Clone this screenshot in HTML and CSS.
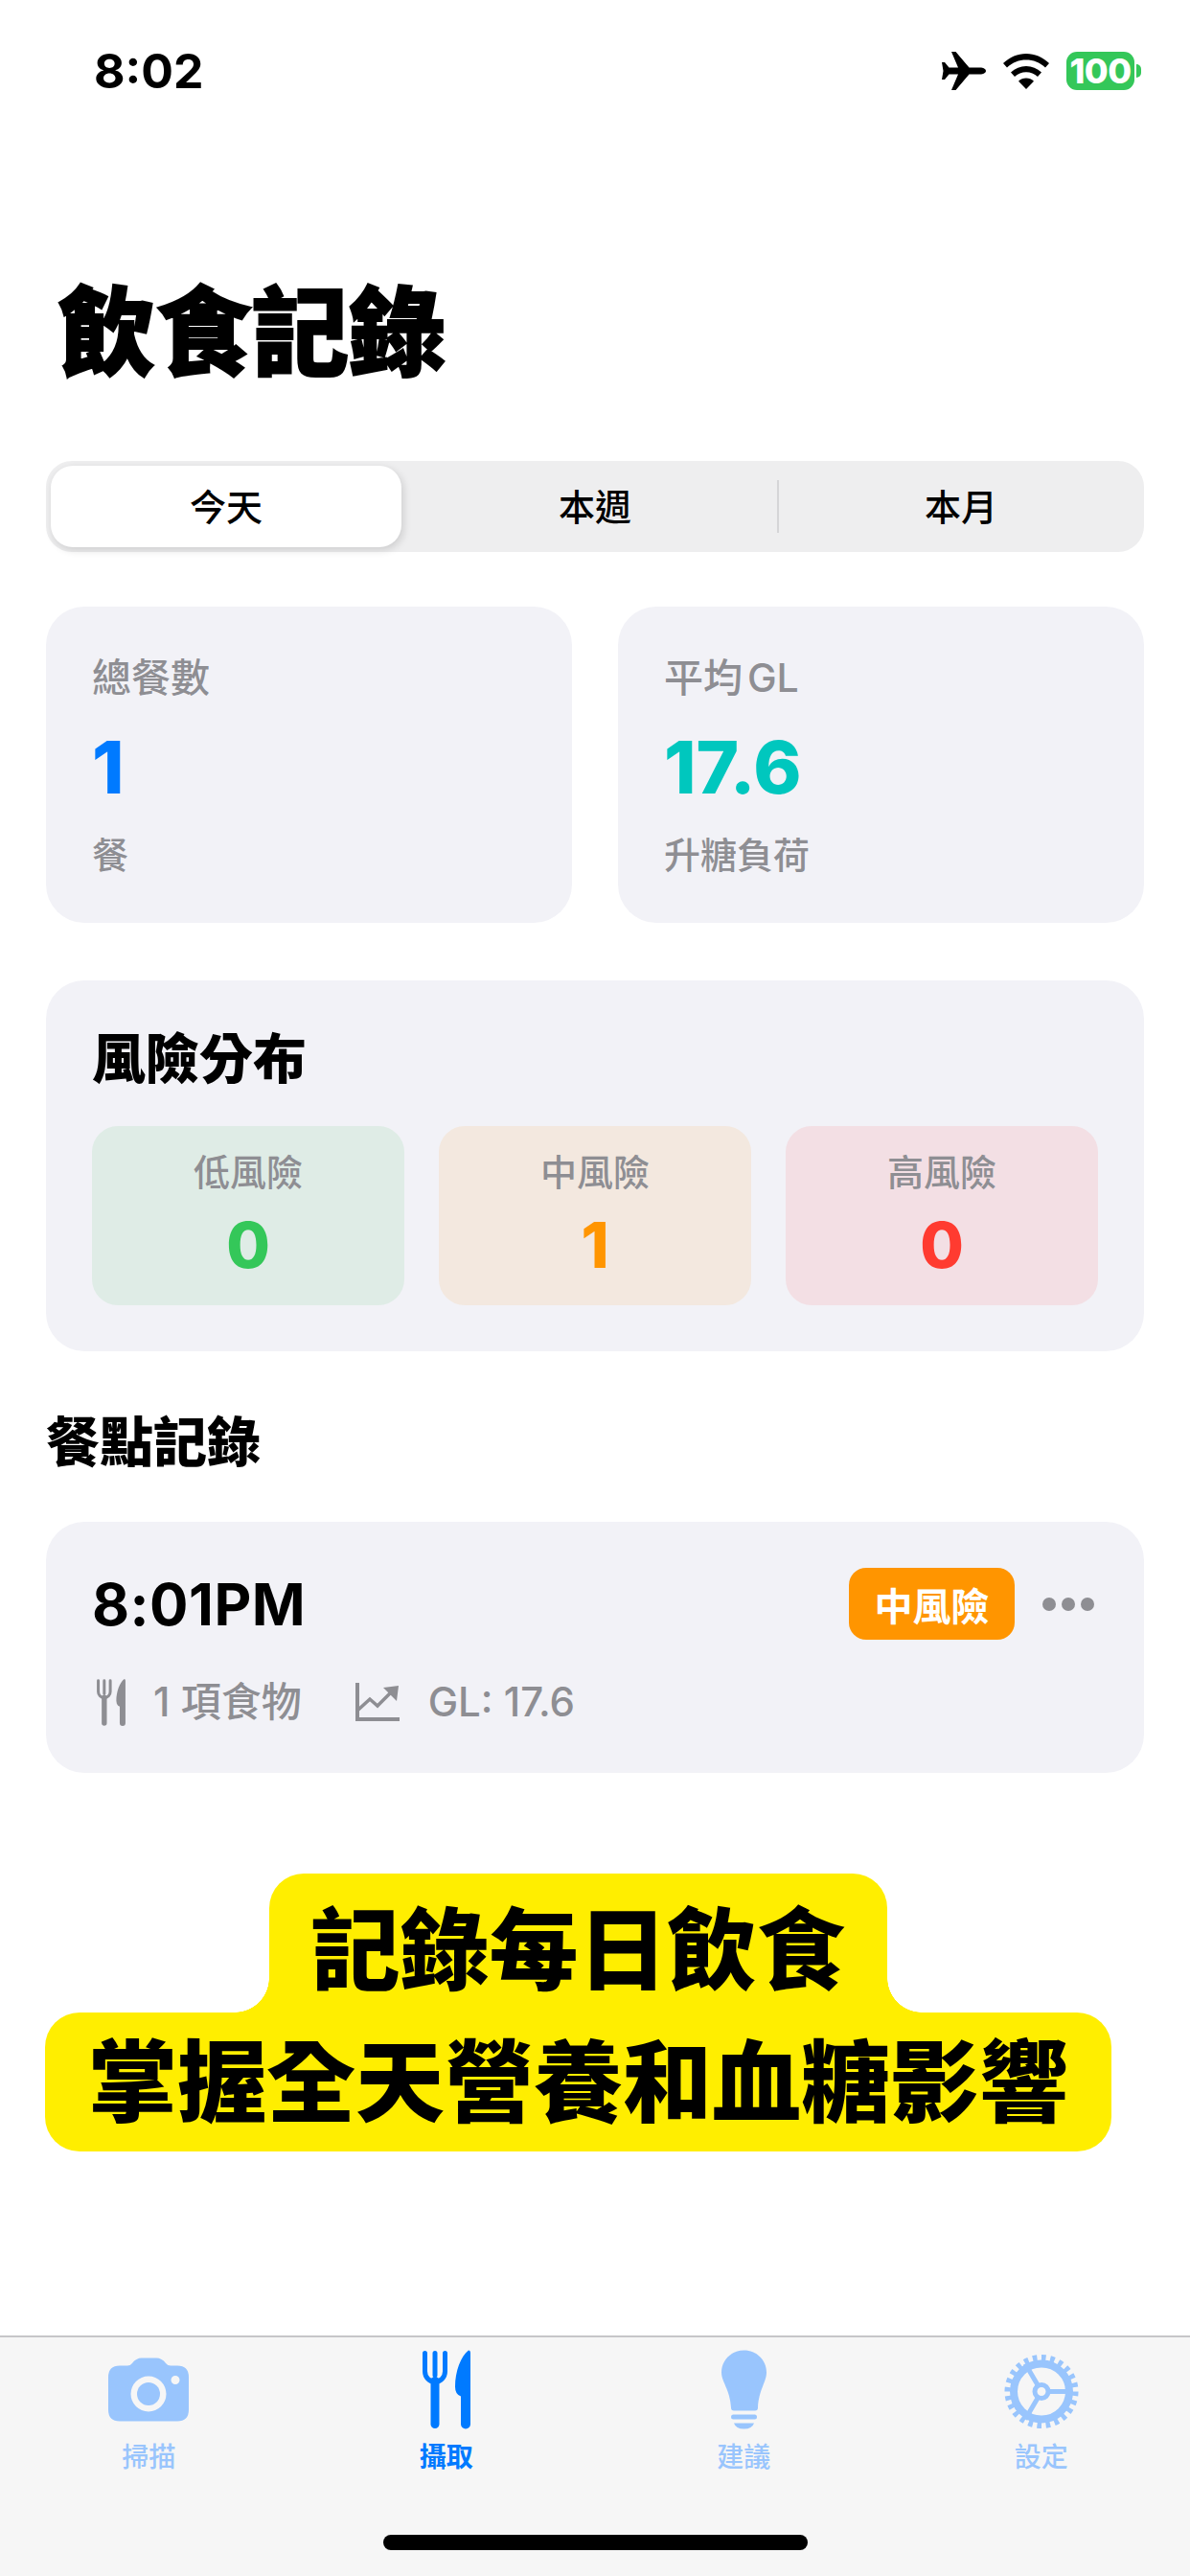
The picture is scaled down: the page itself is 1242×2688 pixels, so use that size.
FILE: index.html
```html
<!DOCTYPE html>
<html lang="zh-Hant">
<head>
<meta charset="utf-8">
<title>飲食記錄</title>
<link rel="stylesheet" href="styles.css">
</head>
<body>
<div class="screen">
  <header class="status">
    <span class="clock">8:02</span>
    <div class="status-icons">
      <svg class="ic-plane" viewBox="0 0 46 40" width="46" height="40"><path fill="#000" d="M46 20c0-2.200-3-3.600-6-3.600H28.500L14.500 0H10l7 16.400H7.500L3 11H0l1.500 9L0 29h3l4.500-5.400H17L10 40h4.500l14-16.400H40c3 0 6-1.400 6-3.600z"/></svg>
      <svg class="ic-wifi" viewBox="0 0 48 37" width="48" height="37"><path fill="#000" d="M24 0C15 0 7 3.500 0 10l4 4.500C10 9 16.500 6.500 24 6.500S38 9 44 14.500l4-4.500C41 3.500 33 0 24 0zM24 13c-6 0-11.500 2.300-16 6.500l4 4.500c3.300-3 7.500-4.800 12-4.800s8.700 1.800 12 4.800l4-4.500C35.500 15.300 30 13 24 13zM24 25.500c-3 0-5.800 1.100-8 3.200L24 37l8-8.300c-2.200-2.100-5-3.200-8-3.200z"/></svg>
      <div class="battery"><span class="battery-body">100</span><span class="battery-nub"></span></div>
    </div>
  </header>

  <main class="content">
    <h1 class="title">飲食記錄</h1>

    <nav class="segment">
      <span class="seg seg-active">今天</span>
      <span class="seg seg-mid">本週</span>
      <span class="seg-divider"></span>
      <span class="seg seg-last">本月</span>
    </nav>

    <section class="stats">
      <article class="stat">
        <div class="stat-label">總餐數</div>
        <div class="stat-value blue">1</div>
        <div class="stat-sub">餐</div>
      </article>
      <article class="stat">
        <div class="stat-label">平均 GL</div>
        <div class="stat-value teal">17.6</div>
        <div class="stat-sub">升糖負荷</div>
      </article>
    </section>

    <section class="risk">
      <h2 class="risk-title">風險分布</h2>
      <div class="risk-grid">
        <div class="tile tile-low"><div class="tile-label">低風險</div><div class="tile-value v-green">0</div></div>
        <div class="tile tile-mid"><div class="tile-label">中風險</div><div class="tile-value v-orange">1</div></div>
        <div class="tile tile-high"><div class="tile-label">高風險</div><div class="tile-value v-red">0</div></div>
      </div>
    </section>

    <h2 class="section-title">餐點記錄</h2>

    <article class="meal">
      <div class="meal-top">
        <span class="meal-time">8:01PM</span>
        <div class="meal-actions">
          <span class="badge">中風險</span>
          <span class="dots"><i></i><i></i><i></i></span>
        </div>
      </div>
      <div class="meal-meta">
        <svg class="ic-fork-sm" viewBox="0 0 50 82" width="30" height="49"><g fill="none" stroke="#8e8e93" stroke-linecap="round"><path stroke-width="5" d="M2.500 3V22a10.500 11 0 0 0 21 0V3M13 3V26"/><path stroke-width="9" d="M13 32V77"/></g><path fill="#8e8e93" d="M48 0q2 0 2 3V77a5 5 0 0 1-10 0V48q-6-2-6-10C34 22 40 6 48 0z"/></svg>
        <span class="meta-text">1 項食物</span>
        <svg class="ic-chart" viewBox="0 0 46 40" width="46" height="40"><g fill="none" stroke="#8e8e93"><path stroke-width="4" d="M2 0V38H46"/><path stroke-width="3.500" d="M3 28L15 17L23 24L37 10"/></g><path fill="#8e8e93" d="M29 5L45 3L43 19z"/></svg>
        <span class="meta-text">GL: 17.6</span>
      </div>
    </article>

    <div class="banner">
      <div class="banner-top">記錄每日飲食</div>
      <div class="banner-bottom">掌握全天營養和血糖影響</div>
    </div>
  </main>

  <footer class="tabbar">
    <div class="tabs">
      <div class="tab tab-off">
        <svg class="tab-icon" viewBox="0 0 84 66" width="84" height="66"><path class="off-fill" fill-rule="evenodd" d="M12 8H20Q23 8 25 5.500Q29 0 35 0H50Q56 0 60 5.500Q62 8 65 8H72Q84 8 84 20V54Q84 66 72 66H12Q0 66 0 54V20Q0 8 12 8zM42 19a18.500 18.500 0 1 0 0 37a18.500 18.500 0 1 0 0-37zM70 18.500a4.500 4.500 0 1 0 0 9a4.500 4.500 0 1 0 0-9z"/><circle class="off-fill" cx="42" cy="37.500" r="12"/></svg>
        <span class="tab-label">掃描</span>
      </div>
      <div class="tab tab-on">
        <svg class="tab-icon" viewBox="0 0 50 82" width="50" height="82"><g fill="none" stroke="#007aff" stroke-linecap="round"><path stroke-width="5" d="M2.500 3V22a10.500 11 0 0 0 21 0V3M13 3V26"/><path stroke-width="9" d="M13 32V77"/></g><path fill="#007aff" d="M48 0q2 0 2 3V77a5 5 0 0 1-10 0V48q-6-2-6-10C34 22 40 6 48 0z"/></svg>
        <span class="tab-label">攝取</span>
      </div>
      <div class="tab tab-off">
        <svg class="tab-icon" viewBox="0 0 47 82" width="47" height="82"><path class="off-fill" d="M23.500 0C36.500 0 47 10 47 23C47 33 39 41 38 60Q38 63 35 63H13Q10 63 10 60C9 41 0 33 0 23C0 10 10.500 0 23.500 0z"/><rect class="off-fill" x="10" y="67" width="27" height="5" rx="2.500"/><path class="off-fill" d="M13 76H34Q32 82 23.500 82T13 76z"/></svg>
        <span class="tab-label">建議</span>
      </div>
      <div class="tab tab-off">
        <svg class="tab-icon tab-gear" viewBox="0 0 78 78" width="78" height="78"><g fill="none" class="off-stroke"><circle cx="39" cy="39" r="29" stroke-width="8"/><circle cx="39" cy="39" r="35" stroke-width="7" pathLength="48" stroke-dasharray="1 1"/><circle cx="39" cy="39" r="7" stroke-width="5"/><path stroke-width="5" d="M46 39H66M35.500 33L22 10M35.500 45L22 68"/></g></svg>
        <span class="tab-label">設定</span>
      </div>
    </div>
    <div class="home-indicator"></div>
  </footer>
</div>
</body>
</html>
```

FILE: styles.css
```css
* { box-sizing: border-box; }
html, body { margin: 0; padding: 0; background: #fff; }
body { font-family: Inter, "Noto Sans CJK TC", "Liberation Sans", sans-serif; color: #000; }

.screen { width: 1242px; height: 2688px; display: flex; flex-direction: column; overflow: hidden; }

/* status bar */
.status { height: 148px; flex: none; display: flex; align-items: center; justify-content: space-between; padding: 0 51px 0 98px; }
.clock { font-size: 50px; font-weight: 700; line-height: 1; }
.status-icons { display: flex; align-items: center; gap: 18px; }
.ic-plane { margin-right: 0; }
.battery { display: flex; align-items: center; gap: 2px; }
.battery-body { width: 71px; height: 40px; background: #34c759; border-radius: 11px; color: #fff; font-size: 36px; font-weight: 800; line-height: 40px; text-align: center; letter-spacing: -0.5px; }
.battery-nub { width: 5px; height: 14px; background: #34c759; border-radius: 0 5px 5px 0; }

/* main */
.content { flex: 1; display: flex; flex-direction: column; padding: 0 48px; min-height: 0; }
.title { margin: 139px 0 0 13px; font-size: 101px; line-height: 120px; font-weight: 900; -webkit-text-stroke: 2px #000; }

/* segmented control */
.segment { margin-top: 74px; height: 95px; flex: none; display: flex; align-items: stretch; background: #eeeeef; border-radius: 27px; padding: 5px; }
.seg { display: flex; align-items: center; justify-content: center; padding-bottom: 4px; font-size: 38px; font-weight: 500; }
.seg-active { width: 366px; margin-right: 12px; background: #fff; border-radius: 23px; box-shadow: 2px 3px 8px rgba(0,0,0,.14); }
.seg-mid { width: 380px; }
.seg-divider { width: 2px; height: 55px; align-self: center; background: #d5d5d7; }
.seg-last { flex: 1; padding-left: 4px; }

/* stat cards */
.stats { margin-top: 57px; height: 330px; flex: none; display: grid; grid-template-columns: 549px 549px; gap: 48px; }
.stat { background: #f2f2f7; border-radius: 40px; padding: 49px 48px 0; }
.stat-label { font-size: 41px; line-height: 50px; color: #8e8e93; font-weight: 500; word-spacing: -6px; }
.stat-value { margin-top: 23px; font-size: 76px; line-height: 90px; font-weight: 800; }
.stat-sub { margin-top: 22px; font-size: 38px; line-height: 50px; color: #8e8e93; font-weight: 500; }
.blue { color: #007aff; }
.teal { color: #00c7be; }

/* risk */
.risk { margin-top: 60px; flex: none; background: #f2f2f7; border-radius: 40px; padding: 47px 48px 48px; }
.risk-title { margin: 0; font-size: 56px; line-height: 70px; font-weight: 900; }
.risk-grid { margin-top: 35px; display: grid; grid-template-columns: repeat(3, 1fr); gap: 36px; }
.tile { height: 187px; border-radius: 27px; padding-top: 23px; text-align: center; }
.tile-low { background: #dfece6; }
.tile-mid { background: #f3e8df; }
.tile-high { background: #f3dfe4; }
.tile-label { font-size: 38px; line-height: 50px; color: #8e8e93; font-weight: 500; }
.tile-value { margin-top: 13px; font-size: 66px; line-height: 76px; font-weight: 800; }
.v-green { color: #34c759; }
.v-orange { color: #ff9500; }
.v-red { color: #ff3b30; }

.section-title { margin: 60px 0 0 0; font-size: 56px; line-height: 70px; font-weight: 900; }

/* meal card */
.meal { margin-top: 48px; height: 262px; flex: none; background: #f2f2f7; border-radius: 40px; padding: 48px 52px 0 48px; }
.meal-top { display: flex; align-items: center; justify-content: space-between; height: 75px; }
.meal-time { font-size: 60px; font-weight: 700; line-height: 1; letter-spacing: 0.5px; }
.meal-actions { display: flex; align-items: center; gap: 29px; }
.badge { width: 173px; height: 75px; display: flex; align-items: center; justify-content: center; background: #ff9500; border-radius: 18px; color: #fff; font-size: 40px; font-weight: 700; }
.dots { display: flex; gap: 6px; }
.dots i { width: 14px; height: 14px; border-radius: 50%; background: #8e8e93; }
.meal-meta { margin: 40px 0 0 5px; height: 50px; display: flex; align-items: center; }
.meta-text { font-size: 42px; line-height: 50px; color: #8e8e93; font-weight: 500; }
.ic-fork-sm { margin-right: 29px; }
.ic-chart { margin: 0 30px 0 56px; }

/* yellow caption */
.banner { margin: 105px 0 0 -1px; width: 1113px; display: flex; flex-direction: column; align-items: center; font-weight: 900; font-size: 93px; color: #000; }
.banner-top, .banner-bottom { background: #ffee00; height: 145px; text-align: center; white-space: nowrap; }
.banner-top { position: relative; width: 645px; line-height: 160px; border-radius: 36px 36px 0 0; }
.banner-top::before, .banner-top::after { content: ""; position: absolute; bottom: 0; width: 36px; height: 36px; }
.banner-top::before { left: -36px; background: radial-gradient(circle at 0 0, transparent 35.500px, #ffee00 36px); }
.banner-top::after { right: -36px; background: radial-gradient(circle at 100% 0, transparent 35.500px, #ffee00 36px); }
.banner-bottom { width: 100%; line-height: 146px; border-radius: 36px; }

/* tab bar */
.tabbar { height: 251px; flex: none; background: #f6f6f6; border-top: 2px solid #c6c6c8; display: flex; flex-direction: column; align-items: center; }
.tabs { width: 100%; display: grid; grid-template-columns: repeat(4, 1fr); }
.tab { display: flex; flex-direction: column; align-items: center; padding-top: 13px; }
.tab-icon { height: 83px; display: block; }
.tab-gear { transform: translateY(2px); }
.tab-label { margin-top: 12px; font-size: 28px; line-height: 34px; font-weight: 700; }
.tab-off .tab-label { color: #99c5fd; font-weight: 500; }
.tab-on .tab-label { color: #007aff; }
.off-fill { fill: #99c5fd; }
.off-stroke { stroke: #99c5fd; }
.home-indicator { margin-top: 64px; width: 443px; height: 16px; border-radius: 8px; background: #000; }
```
